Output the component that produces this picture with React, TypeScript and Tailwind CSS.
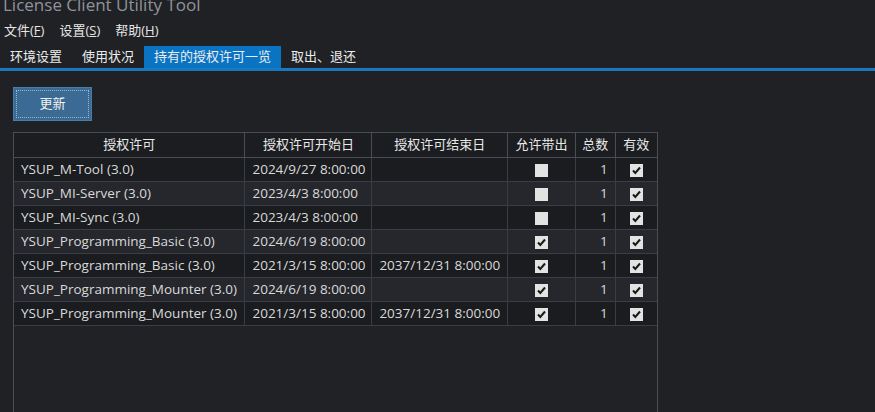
import React from 'react';

const rows = [
    { name: 'YSUP_M-Tool (3.0)', start: '2024/9/27 8:00:00', end: '', out: false, total: 1, valid: true },
    { name: 'YSUP_MI-Server (3.0)', start: '2023/4/3 8:00:00', end: '', out: false, total: 1, valid: true },
    { name: 'YSUP_MI-Sync (3.0)', start: '2023/4/3 8:00:00', end: '', out: false, total: 1, valid: true },
    { name: 'YSUP_Programming_Basic (3.0)', start: '2024/6/19 8:00:00', end: '', out: true, total: 1, valid: true },
    { name: 'YSUP_Programming_Basic (3.0)', start: '2021/3/15 8:00:00', end: '2037/12/31 8:00:00', out: true, total: 1, valid: true },
    { name: 'YSUP_Programming_Mounter (3.0)', start: '2024/6/19 8:00:00', end: '', out: true, total: 1, valid: true },
    { name: 'YSUP_Programming_Mounter (3.0)', start: '2021/3/15 8:00:00', end: '2037/12/31 8:00:00', out: true, total: 1, valid: true },
];

const Check = ({ on }: { on: boolean }) => (
    <span className="inline-flex w-[13px] h-[13px] bg-[#e3e3e3] items-center justify-center align-middle">
        {on && (
            <svg width="11" height="11" viewBox="0 0 11 11">
                <path d="M2 5.5 L4.3 8 L9 2.5" fill="none" stroke="#1a1a1a" strokeWidth="2" />
            </svg>
        )}
    </span>
);

const font = { fontFamily: '"Open Sans", "Noto Sans CJK SC", sans-serif' };

export default function App() {
    return (
        <div className="w-[875px] h-[412px] overflow-hidden bg-[#1f2125] text-[13px] text-[#d9d9d9]" style={font}>
            {/* title, top edge is cut off in the window */}
            <div className="h-[18px] overflow-hidden">
                <div className="-mt-[7px] ml-[3px] text-[17px] leading-[24px] text-[#8f949b]">License Client Utility Tool</div>
            </div>

            {/* menu */}
            <div className="flex h-[26px] items-center gap-[15px] pl-[4px] text-[#e6e6e6]">
                <span>文件(<u>F</u>)</span>
                <span>设置(<u>S</u>)</span>
                <span>帮助(<u>H</u>)</span>
            </div>

            {/* tabs */}
            <div className="flex h-[24px] items-end pl-[3px] text-[#ececec]">
                <div className="h-[22px] px-[7px] flex items-center">环境设置</div>
                <div className="h-[22px] px-[7px] flex items-center ml-[6px]">使用状况</div>
                <div className="h-[22px] px-[10px] flex items-center bg-[#0a74c4] ml-[3px]">持有的授权许可一览</div>
                <div className="h-[22px] px-[10px] flex items-center">取出、退还</div>
            </div>
            <div className="h-[3px] bg-[#1c78bd]" />

            <div className="pl-[13px] pt-[16px]">
                <button className="w-[79px] h-[34px] bg-[#3b6b94] border border-[#4a7ea8] p-[2px] text-[#f0f0f0]">
                    <span className="flex w-full h-full items-center justify-center border border-dotted border-[#9bb9d2]">更新</span>
                </button>

                <div className="mt-[11px] w-[645px] h-[300px] border border-[#4a4d54] bg-[#202226]">
                    <table className="border-collapse table-fixed text-[13px]">
                        <colgroup>
                            <col className="w-[231px]" />
                            <col className="w-[127px]" />
                            <col className="w-[136px]" />
                            <col className="w-[68px]" />
                            <col className="w-[40px]" />
                            <col className="w-[42px]" />
                        </colgroup>
                        <thead>
                            <tr className="h-[24px] bg-[#1b1d21] text-[#e8e8e8]">
                                {['授权许可', '授权许可开始日', '授权许可结束日', '允许带出', '总数', '有效'].map((h, i) => (
                                    <th key={i} className={`font-normal border-b border-[#4a4d54] ${i < 5 ? 'border-r' : ''} px-0`}>{h}</th>
                                ))}
                            </tr>
                        </thead>
                        <tbody className="text-[13.5px]">
                            {rows.map((r, i) => (
                                <tr key={i} className={`h-[24px] ${i % 2 === 0 ? 'bg-[#1a1c20]' : 'bg-[#25272c]'}`}>
                                    <td className="pl-[7px] border-r border-b border-[#3a3d43] whitespace-nowrap overflow-hidden">{r.name}</td>
                                    <td className="pl-[7px] border-r border-b border-[#3a3d43] whitespace-nowrap overflow-hidden">{r.start}</td>
                                    <td className="pl-[7px] border-r border-b border-[#3a3d43] whitespace-nowrap overflow-hidden">{r.end}</td>
                                    <td className="text-center border-r border-b border-[#3a3d43]"><Check on={r.out} /></td>
                                    <td className="text-right pr-[7px] border-r border-b border-[#3a3d43]">{r.total}</td>
                                    <td className="text-center border-b border-[#3a3d43]"><Check on={r.valid} /></td>
                                </tr>
                            ))}
                        </tbody>
                    </table>
                </div>
            </div>
        </div>
    );
}
